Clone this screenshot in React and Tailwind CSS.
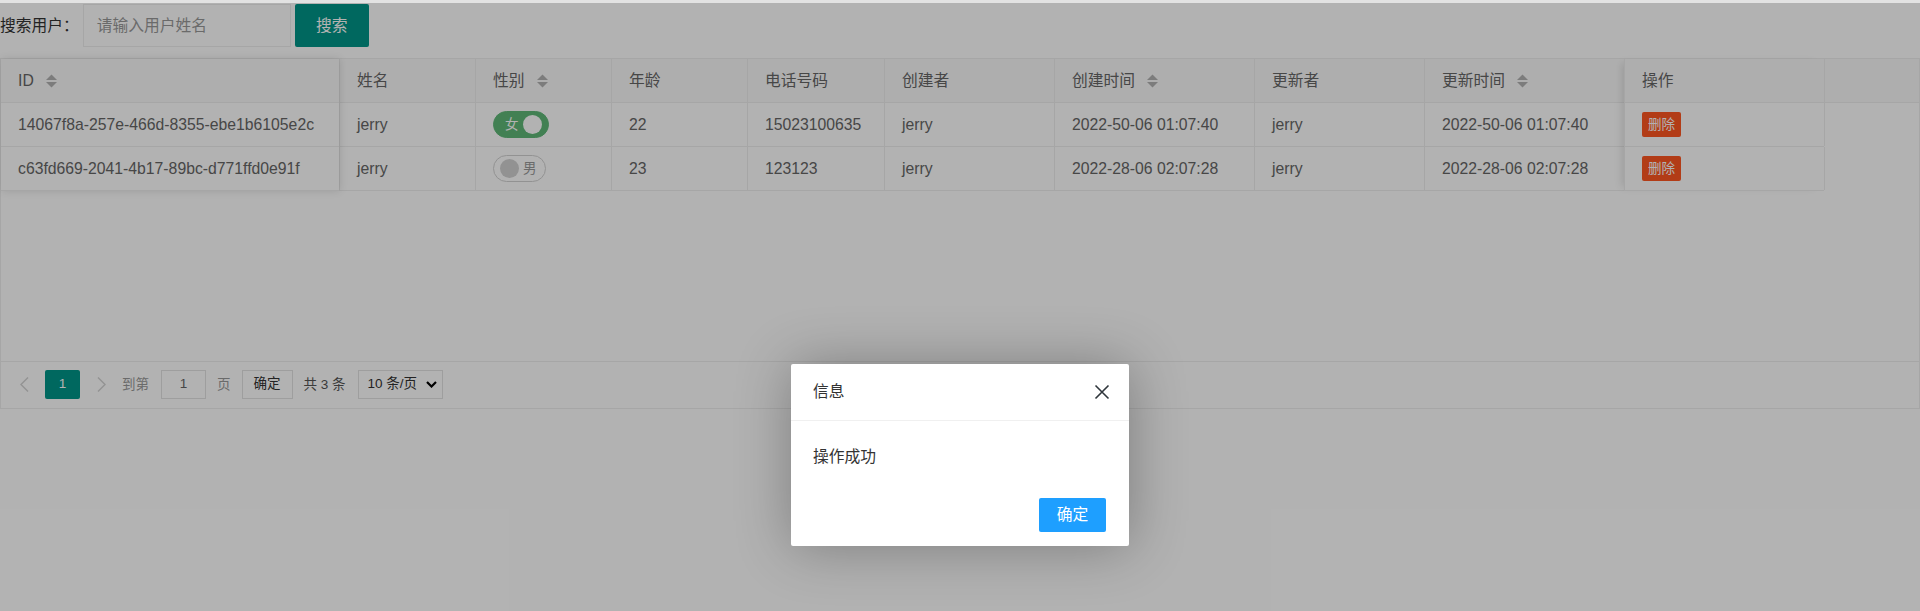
import React from 'react';

const columns = [
  { key: 'id', title: 'ID', w: 'w-[339px]', sort: true },
  { key: 'name', title: '姓名', w: 'w-[136px]' },
  { key: 'sex', title: '性别', w: 'w-[136px]', sort: true },
  { key: 'age', title: '年龄', w: 'w-[136px]' },
  { key: 'phone', title: '电话号码', w: 'w-[137px]' },
  { key: 'creator', title: '创建者', w: 'w-[170px]' },
  { key: 'ctime', title: '创建时间', w: 'w-[200px]', sort: true },
  { key: 'updater', title: '更新者', w: 'w-[170px]' },
  { key: 'utime', title: '更新时间', w: 'w-[200px]', sort: true },
  { key: 'op', title: '操作', w: 'w-[200px]' },
];

const rows = [
  {
    id: '14067f8a-257e-466d-8355-ebe1b6105e2c',
    name: 'jerry',
    sex: '女',
    on: true,
    age: 22,
    phone: '15023100635',
    creator: 'jerry',
    ctime: '2022-50-06 01:07:40',
    updater: 'jerry',
    utime: '2022-50-06 01:07:40',
  },
  {
    id: 'c63fd669-2041-4b17-89bc-d771ffd0e91f',
    name: 'jerry',
    sex: '男',
    on: false,
    age: 23,
    phone: '123123',
    creator: 'jerry',
    ctime: '2022-28-06 02:07:28',
    updater: 'jerry',
    utime: '2022-28-06 02:07:28',
  },
];

const SortIcon = () => (
  <svg width="11" height="14" viewBox="0 0 11 14" className="ml-[12px] shrink-0">
    <polygon points="0,6 5.5,0.5 11,6" fill="#b2b2b2" />
    <polygon points="0,8 5.5,13.5 11,8" fill="#b2b2b2" />
  </svg>
);

const Switch = ({ on, text }) =>
  on ? (
    <div className="relative h-[27px] w-[56px] rounded-full border border-[#5fb878] bg-[#5fb878]">
      <span className="absolute left-[11px] top-0 text-[13.5px] leading-[25px] text-white">{text}</span>
      <span className="absolute right-[6px] top-[3px] h-[19px] w-[19px] rounded-full bg-white" />
    </div>
  ) : (
    <div className="relative h-[27px] w-[53px] rounded-full border border-[#d2d2d2] bg-white">
      <span className="absolute left-[6px] top-[3px] h-[19px] w-[19px] rounded-full bg-[#d2d2d2]" />
      <span className="absolute left-[29px] top-0 text-[13.5px] leading-[25px] text-[#999]">{text}</span>
    </div>
  );

const Cell = ({ col, row }) => {
  let content = row[col.key];
  if (col.key === 'sex') content = <Switch on={row.on} text={row.sex} />;
  if (col.key === 'op')
    content = (
      <button className="h-[25px] rounded-[2px] bg-[#ff5722] px-[6px] text-[13.5px] leading-[25px] text-white">
        删除
      </button>
    );
  return (
    <div className={`${col.w} flex h-full shrink-0 items-center border-r border-[#eee] px-[17px] whitespace-nowrap`}>
      {content}
    </div>
  );
};

const Chevron = ({ dir }) => (
  <svg width="9" height="15" viewBox="0 0 9 15">
    <polyline
      points={dir === 'left' ? '8,0.5 1,7.5 8,14.5' : '1,0.5 8,7.5 1,14.5'}
      fill="none"
      stroke="#d2d2d2"
      strokeWidth="1.4"
    />
  </svg>
);

export default function App() {
  return (
    <div className="relative h-[611px] w-[1920px] overflow-hidden bg-white font-['Liberation_Sans','Noto_Sans_CJK_SC',sans-serif] text-[15.75px] text-[#666]">
      <div className="h-[3px] bg-[#e2e2e2]" />

      {/* search form */}
      <div className="mt-[1px] flex h-[43px] items-center">
        <span className="text-[#333]">搜索用户：</span>
        <div className="ml-[4px] flex h-[43px] w-[208px] items-center border border-[#eee] px-[13px] text-[#999]">
          请输入用户姓名
        </div>
        <button className="ml-[4px] h-[43px] w-[74px] rounded-[2px] bg-[#009688] text-white">搜索</button>
      </div>

      {/* table */}
      <div className="mt-[11px] h-[351px] border border-[#eee]">
        <div className="relative h-[302px]">
          <div className="flex h-[44px] border-b border-[#eee] bg-[#fafafa] text-[#666]">
            {columns.map((col) => (
              <div
                key={col.key}
                className={`${col.w} flex h-full shrink-0 items-center border-r border-[#eee] px-[17px] whitespace-nowrap`}
              >
                {col.title}
                {col.sort && <SortIcon />}
              </div>
            ))}
          </div>
          {rows.map((row) => (
            <div key={row.id} className="flex h-[44px] w-[1823px] border-b border-[#eee]">
              {columns.map((col) => (
                <Cell key={col.key} col={col} row={row} />
              ))}
            </div>
          ))}
          {/* fixed column shadows */}
          <div className="pointer-events-none absolute left-0 top-0 h-[132px] w-[338px] shadow-[1px_0_8px_rgba(0,0,0,0.12)]" />
          <div className="pointer-events-none absolute left-[1623px] top-0 h-[132px] w-[200px] border-l border-[#eee] shadow-[-6px_0_8px_-4px_rgba(0,0,0,0.12)]" />
        </div>

        {/* pagination */}
        <div className="flex h-[47px] items-start border-t border-[#eee] pt-[8px] text-[13.5px]">
          <div className="ml-[7px] flex h-[29px] w-[32px] items-center justify-center">
            <Chevron dir="left" />
          </div>
          <div className="ml-[5px] flex h-[29px] w-[35px] items-center justify-center rounded-[2px] bg-[#009688] text-white">
            1
          </div>
          <div className="ml-[4px] flex h-[29px] w-[35px] items-center justify-center">
            <Chevron dir="right" />
          </div>
          <span className="ml-[3px] leading-[29px] text-[#999]">到第</span>
          <div className="ml-[12px] flex h-[29px] w-[45px] items-center justify-center border border-[#e2e2e2] bg-white text-[#666]">
            1
          </div>
          <span className="ml-[11px] leading-[29px] text-[#999]">页</span>
          <button className="ml-[11px] h-[29px] w-[51px] border border-[#e2e2e2] bg-white text-[#333]">确定</button>
          <span className="ml-[11px] leading-[29px] text-[#555]">共&nbsp;3&nbsp;条</span>
          <div className="ml-[12px] flex h-[29px] w-[85px] items-center border border-[#e2e2e2] bg-white pl-[9px] text-[#333]">
            10 条/页
            <svg width="11" height="7" viewBox="0 0 11 7" className="ml-[9px]">
              <polyline points="1,1 5.5,5.5 10,1" fill="none" stroke="#000" strokeWidth="2.2" />
            </svg>
          </div>
        </div>
      </div>

      {/* modal shade */}
      <div className="absolute inset-x-0 top-[3px] bottom-0 bg-black/30" />

      {/* dialog */}
      <div className="absolute left-[791px] top-[364px] w-[338px] rounded-[2px] bg-white shadow-[1px_1px_56px_rgba(0,0,0,0.3)]">
        <div className="relative flex h-[57px] items-center border-b border-[#f0f0f0] pl-[22px] text-[15.75px] text-[#333]">
          信息
          <svg width="18" height="18" viewBox="0 0 18 18" className="absolute right-[18px] top-[19px]">
            <path d="M2.5 2.5 L15.5 15.5 M15.5 2.5 L2.5 15.5" stroke="#2f363c" strokeWidth="1.6" fill="none" />
          </svg>
        </div>
        <div className="px-[22px] py-[22px] text-[15.75px] leading-[27px] text-[#333]">操作成功</div>
        <div className="flex justify-end pr-[23px] pt-[6px] pb-[14px]">
          <button className="h-[34px] w-[67px] rounded-[2px] bg-[#1e9fff] text-[15.75px] text-white">确定</button>
        </div>
      </div>
    </div>
  );
}
